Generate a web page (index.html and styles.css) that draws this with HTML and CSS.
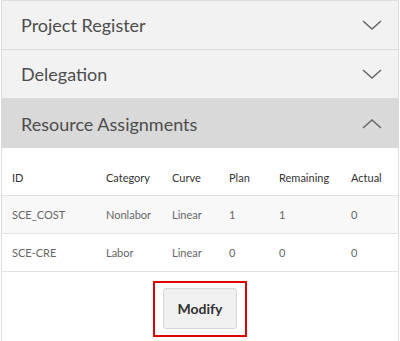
FILE: index.html
```html
<!DOCTYPE html>
<html lang="en">
<head>
  <meta charset="UTF-8" />
  <title>Resource Assignments</title>
  <link rel="stylesheet" href="styles.css">
</head>
<body>
  <div class="accordion">
    <div class="panel-head">
      <span>Project Register</span>
      <svg class="chev" width="20" height="10" viewBox="0 0 20 10"><path d="M1 1 L10 9 L19 1" /></svg>
    </div>
    <div class="panel-head">
      <span>Delegation</span>
      <svg class="chev" width="20" height="10" viewBox="0 0 20 10"><path d="M1 1 L10 9 L19 1" /></svg>
    </div>
    <div class="panel-head open">
      <span>Resource Assignments</span>
      <svg class="chev" width="20" height="10" viewBox="0 0 20 10"><path d="M1 9 L10 1 L19 9" /></svg>
    </div>
    <div class="panel-body">
      <table class="assign">
        <thead>
          <tr>
            <th class="c-id">ID</th>
            <th class="c-cat">Category</th>
            <th class="c-curve">Curve</th>
            <th class="c-plan">Plan</th>
            <th class="c-rem">Remaining</th>
            <th>Actual</th>
          </tr>
        </thead>
        <tbody>
          <tr class="shade">
            <td>SCE_COST</td>
            <td>Nonlabor</td>
            <td>Linear</td>
            <td>1</td>
            <td>1</td>
            <td>0</td>
          </tr>
          <tr>
            <td>SCE-CRE</td>
            <td>Labor</td>
            <td>Linear</td>
            <td>0</td>
            <td>0</td>
            <td>0</td>
          </tr>
        </tbody>
      </table>
      <div class="actions">
        <div class="highlight">
          <button class="btn">Modify</button>
        </div>
      </div>
    </div>
  </div>
</body>
</html>
```

FILE: styles.css
```css
* {
  margin: 0;
  padding: 0;
  box-sizing: border-box;
}

body {
  background: #fff;
  font-family: 'Lato', sans-serif;
  padding: 0 1px;
}

.accordion {
  border: 1px solid #dcdcdc;
  border-bottom: none;
  height: 341px;
}

.panel-head {
  display: flex;
  justify-content: space-between;
  align-items: center;
  height: 49px;
  padding: 0 16px 0 19px;
  background: #f2f2f2;
  border-bottom: 1px solid #dcdcdc;
  color: #4d4d4d;
  font-size: 18px;
}

.panel-head.open {
  background: #d9d9d9;
  border-bottom: none;
}

.chev path {
  fill: none;
  stroke: #666;
  stroke-width: 1.5;
}

.panel-body {
  padding-top: 13px;
}

.assign {
  width: 100%;
  border-collapse: collapse;
  font-size: 11px;
}

.assign th {
  text-align: left;
  font-weight: normal;
  color: #333;
  height: 34px;
  padding: 0 0 0 10px;
}

.assign td {
  color: #666;
  height: 38px;
  padding: 0 0 0 10px;
  border-top: 1px solid #e3e3e3;
}

.assign tbody tr:last-child td {
  border-bottom: 1px solid #e3e3e3;
}

.assign tr.shade td {
  background: #f8f8f8;
}

.c-id { width: 94px; }
.c-cat { width: 66px; }
.c-curve { width: 57px; }
.c-plan { width: 50px; }
.c-rem { width: 72px; }

.actions {
  display: flex;
  justify-content: center;
  padding-top: 9px;
}

.highlight {
  border: 2px solid #e00000;
  padding: 5px 8px 6px;
}

.btn {
  width: 74px;
  height: 41px;
  background: #f0f0f0;
  border: 1px solid #d6d6d6;
  border-radius: 3px;
  font-family: 'Lato', sans-serif;
  font-weight: bold;
  font-size: 14px;
  color: #333;
}
```
